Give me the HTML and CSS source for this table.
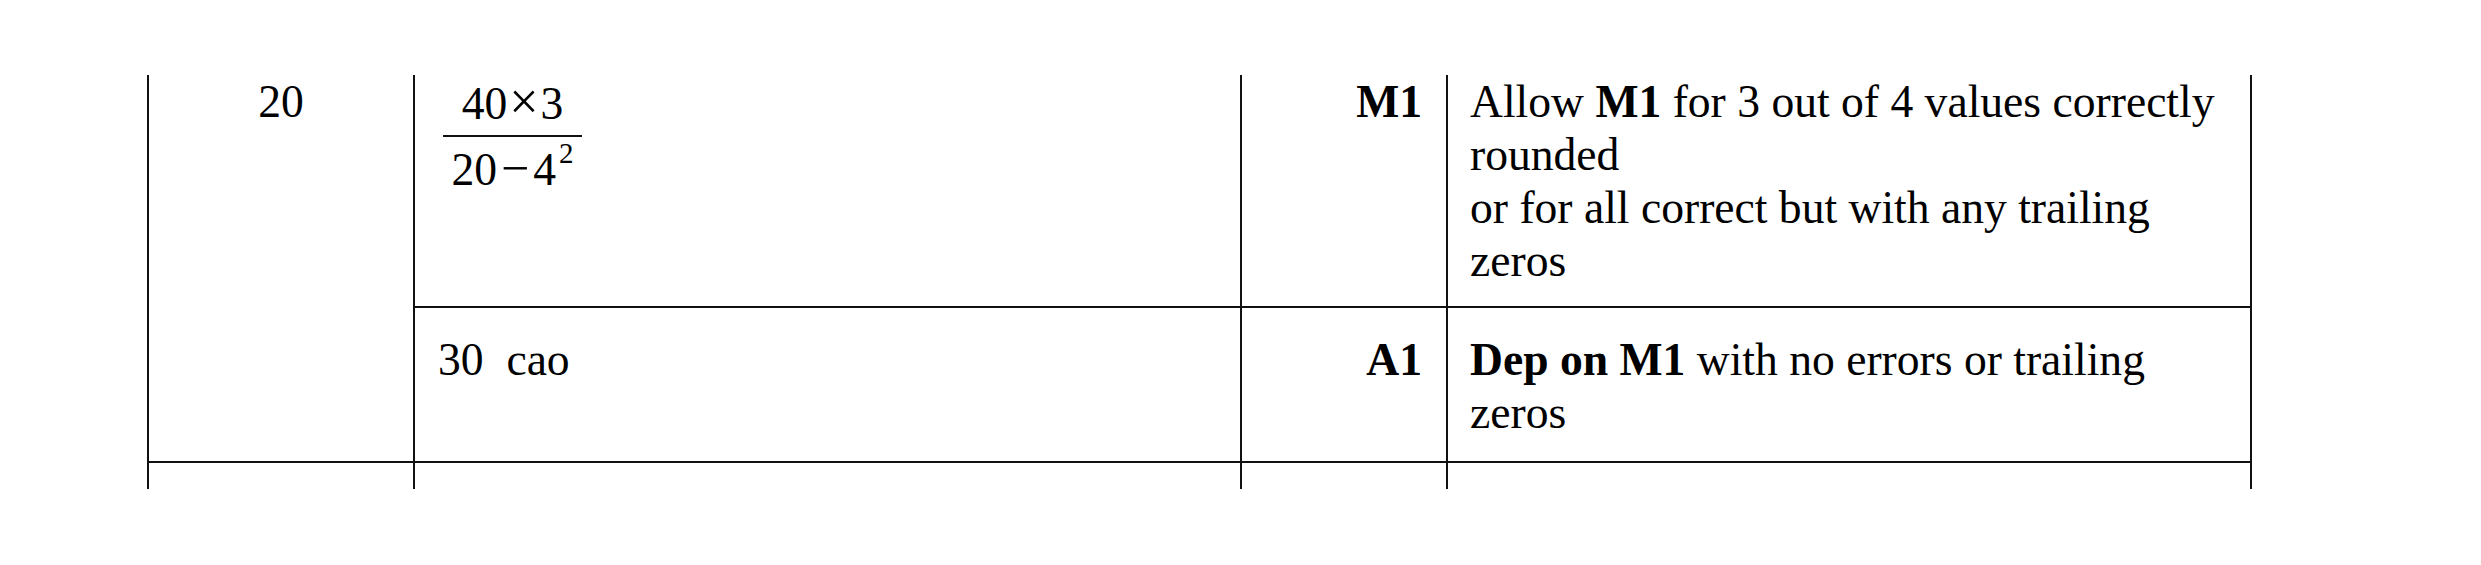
FILE: index.html
```html
<!DOCTYPE html>
<html lang="en">
<head>
<meta charset="utf-8">
<title>Mark scheme</title>
<link rel="stylesheet" href="styles.css">
</head>
<body>
<div class="scheme">
  <div class="cell qnum">20</div>
  <div class="cell work r1">
    <span class="frac">
      <span class="num">40<span class="op times">×</span>3</span>
      <span class="den">20<span class="op minus">−</span>4<sup class="sup">2</sup></span>
    </span>
  </div>
  <div class="cell mark r1"><b>M1</b></div>
  <div class="cell notes r1">Allow <b>M1</b> for 3 out of 4 values correctly rounded<br>or for all correct but with any trailing zeros</div>

  <div class="cell work r2">30&nbsp; cao</div>
  <div class="cell mark r2"><b>A1</b></div>
  <div class="cell notes r2"><b>Dep on M1</b> with no errors or trailing zeros</div>

  <div class="cell r3"></div>
  <div class="cell r3"></div>
  <div class="cell r3"></div>
  <div class="cell notes r3"></div>
</div>
</body>
</html>
```
FILE: styles.css
```css
html, body {
  margin: 0;
  padding: 0;
  background: #fff;
}

body {
  font-family: "Liberation Serif", "Times New Roman", serif;
  font-size: 45.6px;
  line-height: 53px;
  color: #000;
}

.scheme {
  display: grid;
  grid-template-columns: 266px 827px 206px 806px;
  grid-template-rows: auto auto 26px;
  margin: 75px 0 0 147px;
  width: 2105px;
}

.cell {
  border-left: 2px solid #111;
}

.notes {
  border-right: 2px solid #111;
}

.qnum {
  grid-row: 1 / span 2;
  text-align: center;
  border-bottom: 2px solid #111;
}

.r1 {
  border-bottom: 2px solid #111;
  padding-bottom: 19px;
}

.r2 {
  border-bottom: 2px solid #111;
  padding-top: 25px;
  padding-bottom: 22px;
}

.work {
  padding-left: 23px;
  padding-right: 20px;
}

.mark {
  text-align: right;
  padding-right: 24px;
}

.notes {
  padding-left: 22px;
  padding-right: 20px;
}

.frac {
  display: inline-flex;
  flex-direction: column;
  width: 139px;
  margin-left: 5px;
  margin-top: 7px;
  text-align: center;
  line-height: 44px;
}

.num {
  padding-bottom: 9px;
  border-bottom: 2px solid #111;
}

.den {
  padding-top: 11px;
}

.op {
  line-height: 0;
}

.times {
  font-size: 52px;
  margin: 0 2px;
}

.minus {
  font-size: 50px;
  margin: 0 4px;
}

.sup {
  font-size: 29px;
  line-height: 0;
  vertical-align: 22px;
  margin-left: 3px;
}
```
